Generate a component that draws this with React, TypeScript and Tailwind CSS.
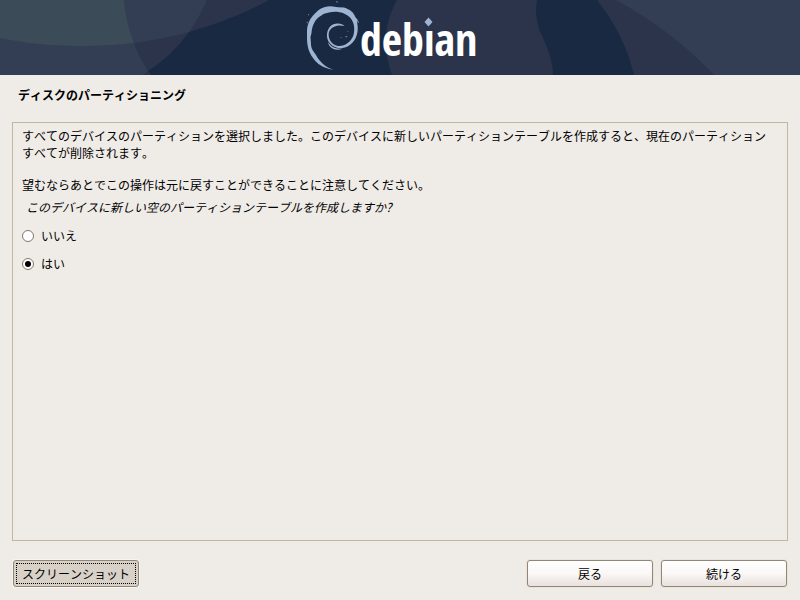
import React, { useState } from 'react';

interface Choice {
  value: string;
  label: string;
}

const choices: Choice[] = [
  { value: 'no', label: 'いいえ' },
  { value: 'yes', label: 'はい' },
];

const DebianLogo: React.FC = () => (
  <svg className="relative h-[75px] w-[190px]" viewBox="295 0 190 75" role="img" aria-label="debian">
    {/* Swirl */}
    <g fill="#9db4d3">
      <path d="M336 70.5C327 69 319 66 314.500 60L313 58C308.500 52 307 45 307 38L307 30C307.500 24 310 18 315 13.500L318 10.500C322 7.500 326 6.300 331 6.300L338 7.300L344 7.500C350 9.500 353.500 12 355.300 17L357.800 20L357.200 23C358.200 28 358 33 355.700 38C352 45.500 344 49.500 337 47.800C330 45.500 326.300 40 327 34C328 27 332 23.300 338 23.500C341 23.700 343 24.500 344.500 26C337.500 24.300 331 26.500 329 32C327.500 38 331 44 337 45.800C344 47 351.500 42 353.500 35C355 29 354.500 23 350.500 18C345 12 336 10.500 329 12.500L324 13.800L319 17C314 21 312 27 311.500 33L310.500 37L311 44C311 49 314 52 316 55C320 63 328 69 336 70.500Z" />
      <path d="M328 42C331 47 336 49.500 343 48.500C336 51.500 329 48.500 328 42Z" />
      <path d="M336 1l2 1-1 .8zM308 14l1 .6-1 1zM306.500 22l1-.6v2zM358 21l1 1-.8 1z" />
      <path d="M345 36l3 .2-2 1.200zM340 37.500l1.500-.5v1.200zM347 32l1-1 .5 1z" opacity=".6" />
    </g>
    {/* Wordmark, with its own diamond in place of the dot */}
    <text
      x="360"
      y="56"
      fill="#fff"
      className="text-[44px] font-bold [font-family:'Open_Sans_Condensed','Open_Sans',sans-serif]"
    >
      debian
    </text>
    <rect x="424" y="18" width="10" height="12" fill="#2b344b" />
    <path d="M428.500 17.500L432.500 22L428.500 26.500L424.500 22Z" fill="#9db4d3" />
  </svg>
);

const Banner: React.FC = () => (
  <header className="relative flex h-[75px] justify-center overflow-hidden bg-[#1a2942]">
    <svg
      className="absolute inset-0 h-full w-full"
      viewBox="0 0 800 75"
      preserveAspectRatio="xMidYMid slice"
      aria-hidden="true"
    >
      <g fill="#2b344b">
        <path d="M0 38C28 44 55 46 83 46C100 46 117 45 134 43C153 40 171 37 189 32C217 24 244 14 269 0H0Z" />
        <path d="M0 0H207C202 11 196 22 189 32C178 47 164 61 148 71L151 75H0Z" />
        <path d="M397 0C384 24 382 48 392 75H553C553 67 551 58 548 50C545 42 543 37 540 32C536 20 535 10 537 0Z" />
        <path d="M597 0C615 23 627 46 634 75H800V0Z" />
      </g>
      <g fill="#333d53">
        <path d="M0 38C28 44 55 46 83 46C100 46 117 45 134 43C153 40 171 37 189 32C196 22 202 11 207 0H0Z" />
        <path d="M0 0H124C125 15 129 30 134 43C138 54 142 62 148 71L142 75H0Z" />
        <path d="M616 0C654 21 687 46 714 75H800V0Z" />
      </g>
      <path d="M0 0H124C125 15 129 30 134 43C117 45 100 46 83 46C55 46 28 44 0 38Z" fill="#3c4b58" />
    </svg>
    <div className="pr-5">
      <DebianLogo />
    </div>
  </header>
);

const NavButton: React.FC<{ children: React.ReactNode }> = ({ children }) => (
  <button
    type="button"
    className="h-[27px] w-[126px] rounded-[3px] border border-[#928672] bg-linear-to-b from-white via-[#faf7f6] to-[#e9e2de] shadow-[0_0_0_1px_#e9e4de]"
  >
    {children}
  </button>
);

const App: React.FC = () => {
  const [answer, setAnswer] = useState('yes');

  return (
    <div className="flex min-h-screen flex-col bg-[#efebe7] text-[12px] leading-[17px] text-black [font-family:'Noto_Sans_CJK_JP',sans-serif] [font-kerning:none]">
      <Banner />

      <main className="flex flex-1 flex-col px-3 pt-[11px]">
        <h1 className="px-1.5 font-bold">ディスクのパーティショニング</h1>

        <form className="mt-[19px] flex-1 border border-[#c4b5a2] pt-1 pr-5 pl-[9px]">
          <p>
            すべてのデバイスのパーティションを選択しました。このデバイスに新しいパーティションテーブルを作成すると、現在のパーティションすべてが削除されます。
          </p>
          <p className="mt-[15px]">望むならあとでこの操作は元に戻すことができることに注意してください。</p>

          <fieldset>
            <legend className="px-1 pt-[5px] italic">
              このデバイスに新しい空のパーティションテーブルを作成しますか?
            </legend>
            <div className="mt-3 flex flex-col items-start gap-[11px]">
              {choices.map((choice) => (
                <label key={choice.value} className="flex items-center gap-[7px]">
                  <input
                    type="radio"
                    name="new-table"
                    value={choice.value}
                    checked={answer === choice.value}
                    onChange={() => setAnswer(choice.value)}
                    className="grid h-3 w-3 appearance-none place-items-center rounded-full border border-[#857769] bg-white before:h-1.5 before:w-1.5 before:rounded-full checked:before:bg-black"
                  />
                  {choice.label}
                </label>
              ))}
            </div>
          </fieldset>
        </form>
      </main>

      <footer className="flex items-center justify-between px-[13px] pt-[19px] pb-[13px]">
        <button
          type="button"
          className="h-[27px] w-[126px] rounded-[3px] border border-[#928672] bg-[#d8d1c8] p-0.5 shadow-[0_0_0_1px_#f7f4f1]"
        >
          <span className="flex h-full items-center justify-center border border-dotted border-black">
            スクリーンショット
          </span>
        </button>
        <div className="flex gap-2">
          <NavButton>戻る</NavButton>
          <NavButton>続ける</NavButton>
        </div>
      </footer>
    </div>
  );
};

export default App;
